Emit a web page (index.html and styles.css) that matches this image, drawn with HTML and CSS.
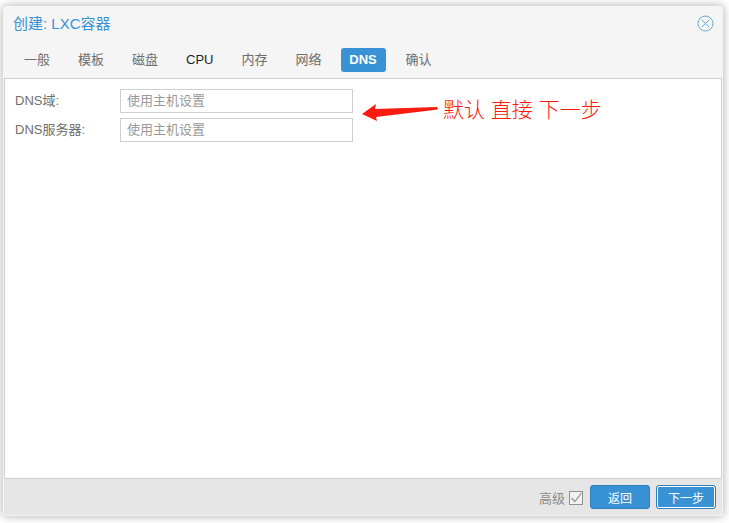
FILE: index.html
```html
<!DOCTYPE html>
<html lang="zh">
<head>
<meta charset="utf-8">
<title>创建: LXC容器</title>
<link rel="stylesheet" href="styles.css">
</head>
<body>
<div class="window">
  <header class="title-bar">
    <span class="title">创建: LXC容器</span>
    <svg class="close" width="17" height="17" viewBox="0 0 17 17" aria-hidden="true">
      <circle cx="8.500" cy="8.500" r="7.500" fill="none" stroke="#6aa6d8" stroke-width="1"/>
      <path d="M4.800 4.800 12.200 12.200M12.200 4.800 4.800 12.200" stroke="#6aa6d8" stroke-width="1" fill="none"/>
    </svg>
  </header>
  <nav class="tabs">
    <span class="tab">一般</span>
    <span class="tab">模板</span>
    <span class="tab">磁盘</span>
    <span class="tab tab-dark">CPU</span>
    <span class="tab">内存</span>
    <span class="tab">网络</span>
    <span class="tab tab-active">DNS</span>
    <span class="tab tab-last">确认</span>
  </nav>
  <main class="panel">
    <div class="row">
      <label class="label">DNS域:</label>
      <div class="input">使用主机设置</div>
    </div>
    <div class="row">
      <label class="label">DNS服务器:</label>
      <div class="input">使用主机设置</div>
    </div>
    <svg class="arrow" width="80" height="20" viewBox="0 0 80 20" aria-hidden="true">
      <path d="M0 12 14 2 13 7 75 5 76 7.500 14 15 15 19Z" fill="#fb1a10"/>
    </svg>
    <div class="note">默认 直接 下一步</div>
  </main>
  <footer class="footer">
    <span class="adv">高级</span>
    <svg class="check" width="14" height="14" viewBox="0 0 14 14" aria-hidden="true">
      <rect x="0.500" y="0.500" width="13" height="13" fill="#f2f2f2" stroke="#8f8f8f"/>
      <path d="M2.500 7 5.800 10.500 12.500 2" fill="none" stroke="#8f8f8f" stroke-width="1.200"/>
    </svg>
    <button class="btn">返回</button>
    <button class="btn btn-focus">下一步</button>
  </footer>
</div>
</body>
</html>
```
FILE: styles.css
```css
* { box-sizing: border-box; }
html, body { margin: 0; padding: 0; background: #fff; }
body {
  width: 729px;
  height: 523px;
  overflow: hidden;
  padding: 6px 0 0 3px;
  font-family: "Liberation Sans", "Noto Sans CJK SC", sans-serif;
}
.window {
  width: 720px;
  height: 510px;
  background: #f5f5f5;
  border-radius: 4px;
  box-shadow: 0 0 8px 1px rgba(0, 0, 0, 0.28);
  display: flex;
  flex-direction: column;
}
.title-bar {
  height: 36px;
  padding: 0 9px 4px 10px;
  display: flex;
  align-items: center;
  justify-content: space-between;
  flex: none;
}
.title { font-size: 15px; color: #3892d4; }
.close { display: block; margin-top: 2px; }
.tabs {
  height: 36px;
  flex: none;
  display: flex;
  gap: 8px;
  padding: 6px 0 0 11px;
}
.tab {
  height: 24px;
  line-height: 24px;
  padding: 0 10px;
  font-size: 13px;
  color: #6e6e6e;
  border-radius: 3px;
}
.tab-dark { color: #1f1f1f; }
.tab-active {
  width: 45px;
  margin-left: 1px;
  padding: 0;
  text-align: center;
  background: #3892d4;
  color: #fff;
  font-weight: bold;
}
.tab-last { margin-left: 2px; }
.panel {
  position: relative;
  flex: 1;
  margin: 0 1px;
  background: #fff;
  border: 1px solid #cfcfcf;
  padding: 10px 0 0 10px;
}
.row {
  display: flex;
  align-items: center;
  height: 24px;
  margin-bottom: 5px;
}
.label { width: 105px; font-size: 13px; line-height: 22px; color: #6e6e6e; }
.input {
  width: 233px;
  height: 24px;
  border: 1px solid #cfcfcf;
  line-height: 22px;
  padding-left: 6px;
  font-size: 13px;
  color: #999;
}
.arrow { position: absolute; left: 357px; top: 23px; }
.note {
  position: absolute;
  left: 438px;
  top: 17px;
  font-size: 21px;
  font-weight: 300;
  line-height: 28px;
  color: #fb1a10;
}
.footer {
  height: 37px;
  flex: none;
  background: #e6e6e6;
  border-radius: 0 0 4px 4px;
  box-shadow: inset 1px 0 0 #f5f5f5, inset -1px -1px 0 #f5f5f5;
  display: flex;
  align-items: center;
  justify-content: flex-end;
  padding: 0 7px 1px 0;
}
.adv { font-size: 13px; color: #8c8c8c; margin-right: 4px; }
.check { display: block; margin-right: 7px; margin-top: 1px; }
.btn {
  width: 60px;
  height: 24px;
  padding: 0;
  font: 12px "Liberation Sans", "Noto Sans CJK SC", sans-serif;
  color: #fff;
  background: #3892d4;
  border: 1px solid #2f80bd;
  border-radius: 3px;
}
.btn-focus { margin-left: 6px; outline: 1px solid #fff; outline-offset: -2px; }
```
